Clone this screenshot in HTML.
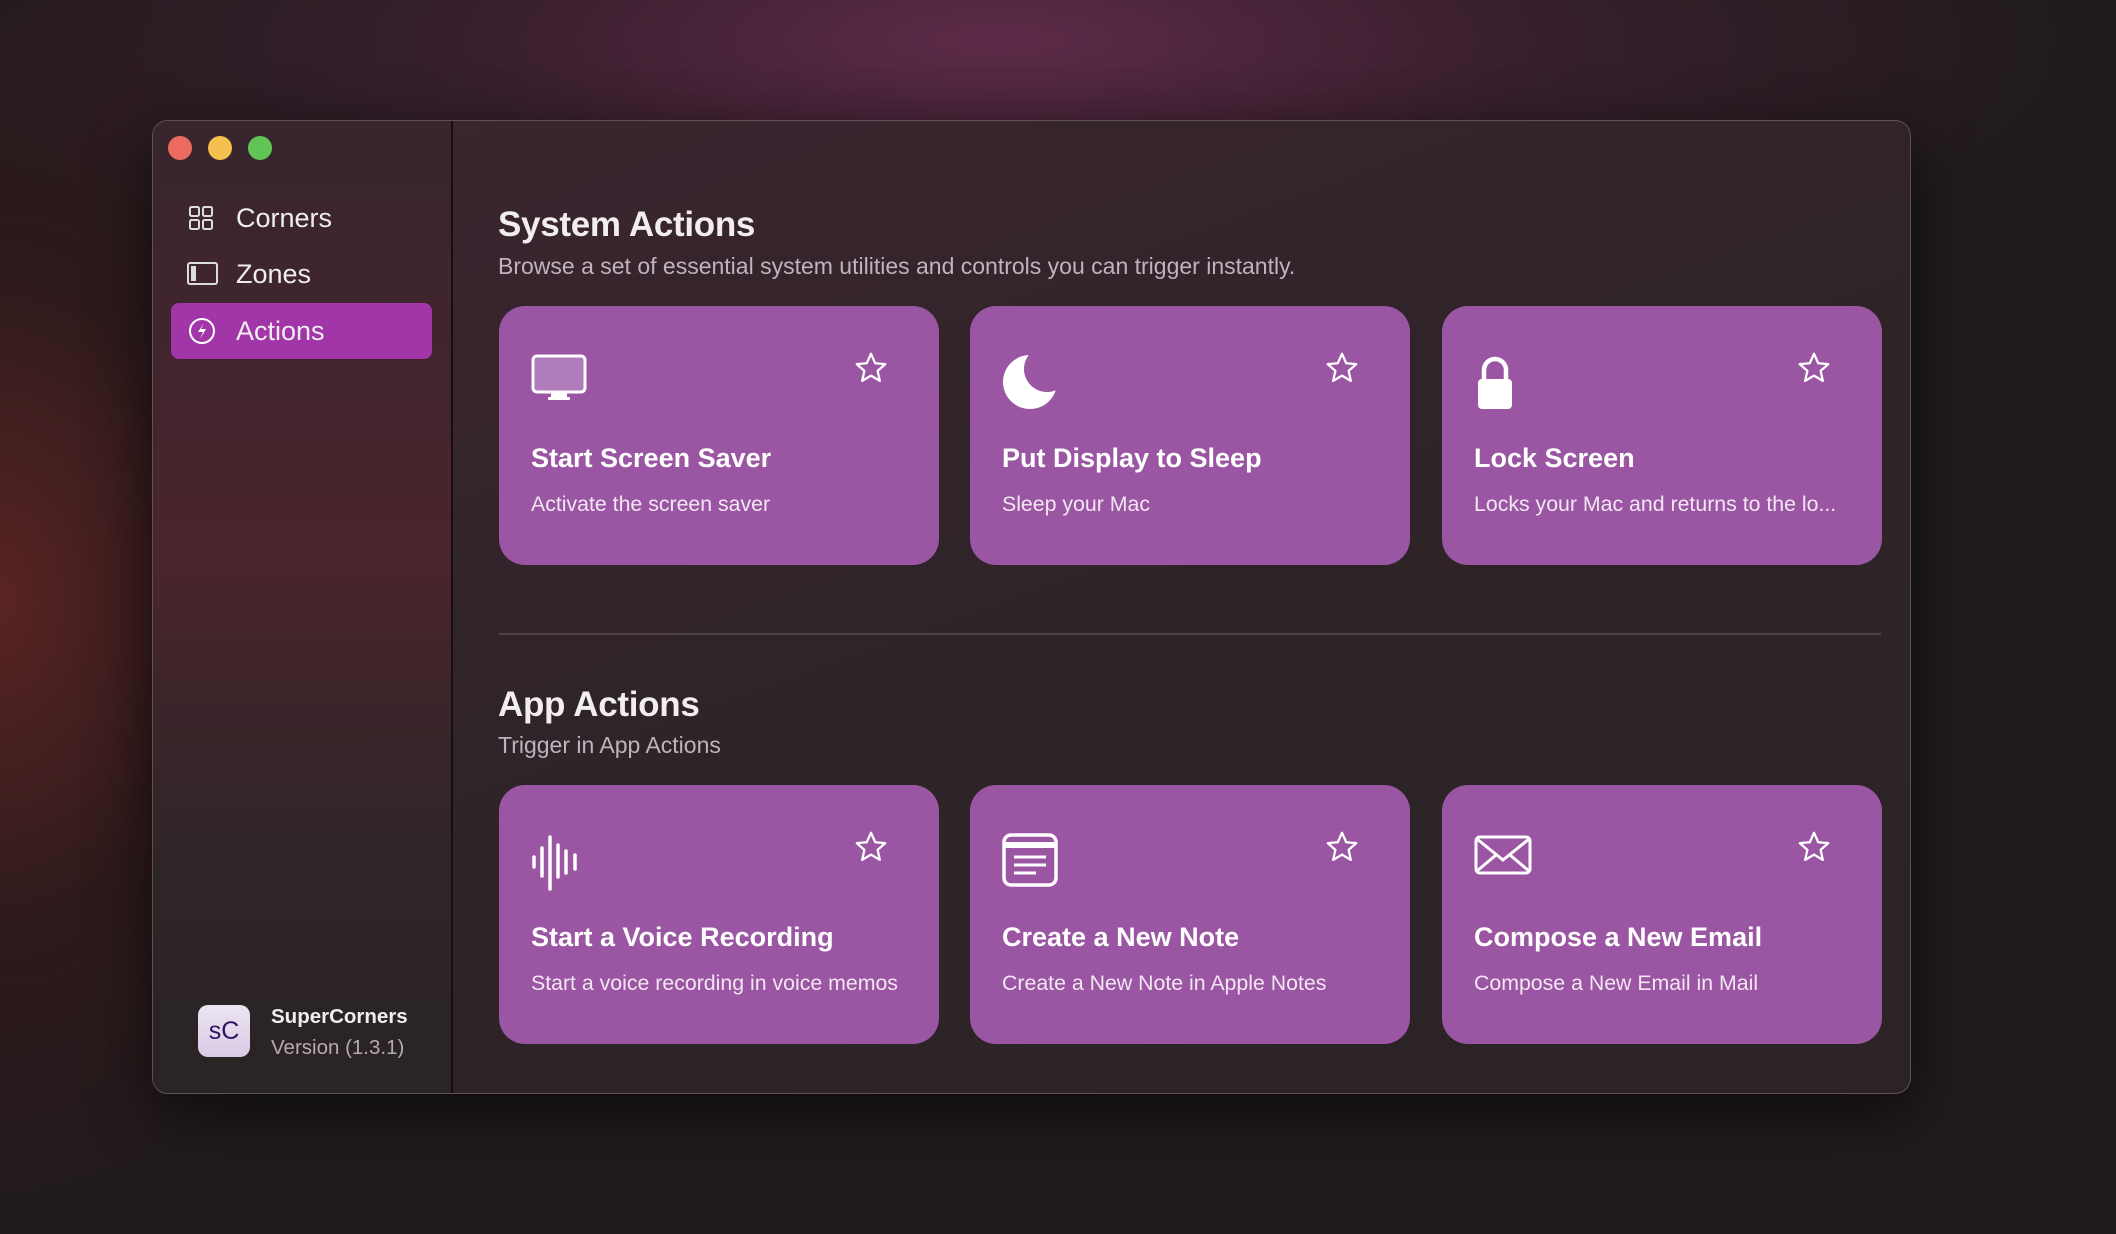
<!DOCTYPE html>
<html><head><meta charset="utf-8"><style>
*{margin:0;padding:0;box-sizing:border-box}
body{width:2116px;height:1234px;overflow:hidden;font-family:"Liberation Sans",sans-serif;
background:radial-gradient(ellipse 1100px 300px at 1000px 40px,#5e2b48 0%,rgba(80,35,60,0.45) 50%,rgba(0,0,0,0) 100%),radial-gradient(ellipse 420px 650px at 0px 600px,#5a2424 0%,rgba(60,25,25,0.5) 50%,rgba(0,0,0,0) 100%),#201b1d;position:relative}
.win{position:absolute;left:152px;top:120px;width:1759px;height:974px;border-radius:16px;border:1.5px solid #5e5158;overflow:hidden;
background:linear-gradient(160deg,#3d2530 0%,#2f2429 45%,#2b2325 100%);box-shadow:0 20px 60px rgba(0,0,0,.6)}
.side{position:absolute;left:0;top:0;width:300px;height:100%;border-right:2px solid #141012;
background:linear-gradient(180deg,#38252e 0%,#4a252d 45%,#2f2527 75%,#292425 100%)}
.dot{position:absolute;top:15px;width:24px;height:24px;border-radius:50%}
.nav{position:absolute;left:18px;width:261px;height:56px;border-radius:8px;color:#eee;font-size:27px;line-height:56px;padding-left:65px}
.nav svg{position:absolute;left:16px;top:14px}
.h{position:absolute;left:345px;color:#f2eef0;font-size:35px;font-weight:bold;letter-spacing:-0.3px}
.sub{position:absolute;left:345px;color:#c0b3bb;font-size:23px}
.card{position:absolute;width:440px;height:259px;border-radius:26px;background:#9a56a3;color:#fff}
.card .t{position:absolute;left:32px;top:137px;font-size:27px;font-weight:bold}
.card .d{position:absolute;left:32px;top:186px;font-size:21.3px;color:#f3e6f2;white-space:nowrap}
.card .ic{position:absolute;left:32px;top:48px}
.card .st{position:absolute;left:354px;top:44px}
</style></head><body>
<div class="win">
<div class="side">
<div class="dot" style="left:15px;background:#ec6a5e"></div>
<div class="dot" style="left:55px;background:#f4bf4f"></div>
<div class="dot" style="left:95px;background:#61c554"></div>
<div class="nav" style="top:69px"><svg width="28" height="28" viewBox="0 0 28 28" fill="none" stroke="#ddd" stroke-width="2"><rect x="3" y="3" width="9" height="9" rx="1.5"/><rect x="16" y="3" width="9" height="9" rx="1.5"/><rect x="3" y="16" width="9" height="9" rx="1.5"/><rect x="16" y="16" width="9" height="9" rx="1.5"/></svg>Corners</div>
<div class="nav" style="top:125px"><svg width="32" height="28" viewBox="0 0 32 28" fill="none" stroke="#ddd" stroke-width="2"><rect x="1" y="3" width="29" height="21" rx="2"/><rect x="4" y="6" width="5" height="15" fill="#ddd" stroke="none"/></svg>Zones</div>
<div class="nav" style="top:182px;background:#a236a9"><svg width="30" height="30" viewBox="0 0 30 30" fill="none" stroke="#fff" stroke-width="2"><circle cx="15" cy="14" r="12"/><path d="M17 6 L11 15 H16 L13 22 L19 12 H14 Z" fill="#fff" stroke="none"/></svg>Actions</div>
<div style="position:absolute;left:45px;top:884px;width:52px;height:52px;border-radius:10px;background:linear-gradient(#ece4f3,#d9cbe6);color:#2a1560;font-size:25px;text-align:center;line-height:52px">sC</div>
<div style="position:absolute;left:118px;top:884px;color:#eee;font-size:20.5px;font-weight:bold">SuperCorners</div>
<div style="position:absolute;left:118px;top:915px;color:#b5aab0;font-size:20.5px">Version (1.3.1)</div>
</div>
<div class="h" style="top:84px">System Actions</div>
<div class="sub" style="top:132px">Browse a set of essential system utilities and controls you can trigger instantly.</div>
<div class="h" style="top:564px">App Actions</div>
<div class="sub" style="top:611px">Trigger in App Actions</div>
<div style="position:absolute;left:346px;top:512px;width:1382px;height:2px;background:#4e4247"></div>

<div class="card" style="left:346px;top:185px"><svg class="ic" width="56" height="48" viewBox="0 0 56 48"><rect x="2" y="2" width="52" height="36" rx="4" fill="#b07cbb" stroke="#fff" stroke-width="3"/><rect x="20" y="38" width="16" height="6" fill="#fff"/><rect x="17" y="43" width="22" height="3" rx="1" fill="#fff"/></svg><svg class="st" width="36" height="36" viewBox="0 0 24 24" fill="none" stroke="#fff" stroke-width="1.5" stroke-linejoin="round"><path d="M12 2.5l2.8 6.3 6.7.6-5.1 4.5 1.5 6.7L12 17.1l-5.9 3.5 1.5-6.7-5.1-4.5 6.7-.6z"/></svg><div class="t">Start Screen Saver</div><div class="d">Activate the screen saver</div></div>
<div class="card" style="left:817px;top:185px"><svg class="ic" width="58" height="58" viewBox="0 0 58 58" style="top:46px"><circle cx="28" cy="30" r="27" fill="#fff"/><circle cx="45" cy="17" r="23" fill="#9a56a3"/></svg><svg class="st" width="36" height="36" viewBox="0 0 24 24" fill="none" stroke="#fff" stroke-width="1.5" stroke-linejoin="round"><path d="M12 2.5l2.8 6.3 6.7.6-5.1 4.5 1.5 6.7L12 17.1l-5.9 3.5 1.5-6.7-5.1-4.5 6.7-.6z"/></svg><div class="t">Put Display to Sleep</div><div class="d">Sleep your Mac</div></div>
<div class="card" style="left:1289px;top:185px"><svg class="ic" width="42" height="58" viewBox="0 0 42 58"><path d="M10 28 V16 a11 11 0 0 1 22 0 V28" fill="none" stroke="#fff" stroke-width="4.5"/><rect x="4" y="25" width="34" height="30" rx="4" fill="#fff"/></svg><svg class="st" width="36" height="36" viewBox="0 0 24 24" fill="none" stroke="#fff" stroke-width="1.5" stroke-linejoin="round"><path d="M12 2.5l2.8 6.3 6.7.6-5.1 4.5 1.5 6.7L12 17.1l-5.9 3.5 1.5-6.7-5.1-4.5 6.7-.6z"/></svg><div class="t">Lock Screen</div><div class="d">Locks your Mac and returns to the lo...</div></div>

<div class="card" style="left:346px;top:664px"><svg class="ic" width="52" height="60" viewBox="0 0 52 60" stroke="#fff" stroke-width="3.5" stroke-linecap="round"><path d="M3 24v10M11 15v28M19 4v52M27 12v32M35 18v22M44 22v14"/></svg><svg class="st" width="36" height="36" viewBox="0 0 24 24" fill="none" stroke="#fff" stroke-width="1.5" stroke-linejoin="round"><path d="M12 2.5l2.8 6.3 6.7.6-5.1 4.5 1.5 6.7L12 17.1l-5.9 3.5 1.5-6.7-5.1-4.5 6.7-.6z"/></svg><div class="t">Start a Voice Recording</div><div class="d">Start a voice recording in voice memos</div></div>
<div class="card" style="left:817px;top:664px"><svg class="ic" width="56" height="54" viewBox="0 0 56 54" fill="none" stroke="#fff"><rect x="2" y="2" width="52" height="50" rx="7" stroke-width="3.5"/><path d="M2 12h52" stroke-width="6"/><path d="M12 24h32M12 32h32M12 40h22" stroke-width="3"/></svg><svg class="st" width="36" height="36" viewBox="0 0 24 24" fill="none" stroke="#fff" stroke-width="1.5" stroke-linejoin="round"><path d="M12 2.5l2.8 6.3 6.7.6-5.1 4.5 1.5 6.7L12 17.1l-5.9 3.5 1.5-6.7-5.1-4.5 6.7-.6z"/></svg><div class="t">Create a New Note</div><div class="d">Create a New Note in Apple Notes</div></div>
<div class="card" style="left:1289px;top:664px"><svg class="ic" width="58" height="44" viewBox="0 0 58 44" fill="none" stroke="#fff" stroke-width="3"><rect x="2" y="4" width="54" height="36" rx="4"/><path d="M3 6l26 21 26-21M3 38l19-16M55 38l-19-16"/></svg><svg class="st" width="36" height="36" viewBox="0 0 24 24" fill="none" stroke="#fff" stroke-width="1.5" stroke-linejoin="round"><path d="M12 2.5l2.8 6.3 6.7.6-5.1 4.5 1.5 6.7L12 17.1l-5.9 3.5 1.5-6.7-5.1-4.5 6.7-.6z"/></svg><div class="t">Compose a New Email</div><div class="d">Compose a New Email in Mail</div></div>
</div>
</body></html>
